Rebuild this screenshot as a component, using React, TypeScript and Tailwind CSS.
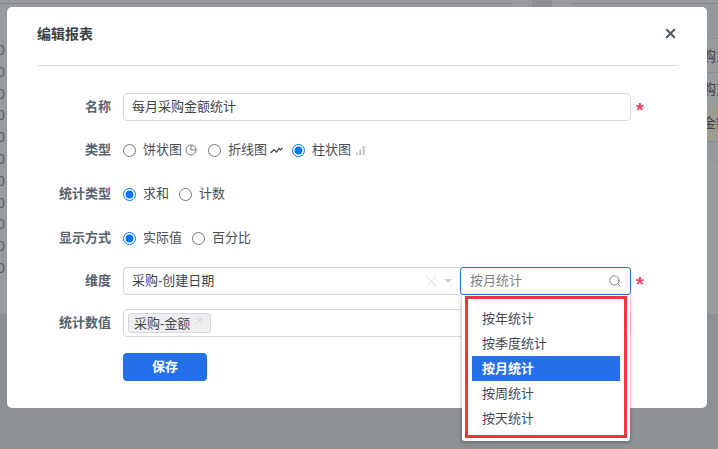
import React from 'react';
import { X, Search } from 'lucide-react';

const leftRows = [0, 1, 2, 3, 4, 5, 6, 7, 8, 9, 10];
const options = ['按年统计', '按季度统计', '按月统计', '按周统计', '按天统计'];

function PieIcon() {
  return (
    <svg width="12" height="12" viewBox="0 0 12 12" fill="none" stroke="#777" strokeWidth="1">
      <circle cx="6" cy="6" r="5" />
      <path d="M6 1v5h5" />
    </svg>
  );
}

function LineIcon() {
  return (
    <svg width="13" height="12" viewBox="0 0 13 12" fill="none" stroke="#444" strokeWidth="1.2">
      <path d="M0.5 9l3.5-3.5 2.5 2.5 2.5-3.5 1.5 1.5 2-2" />
    </svg>
  );
}

function BarIcon() {
  return (
    <svg width="9" height="10" viewBox="0 0 9 10" fill="#bdbdbd">
      <rect x="0" y="7.5" width="1.8" height="2.5" />
      <rect x="3.4" y="4.5" width="1.8" height="5.5" />
      <rect x="6.8" y="1" width="1.8" height="9" />
    </svg>
  );
}

function Radio({ name, label, checked, icon }: { name: string; label: string; checked?: boolean; icon?: React.ReactNode }) {
  return (
    <label className="flex items-center">
      <input type="radio" name={name} defaultChecked={checked} className="m-0 w-[13px] h-[13px]" />
      <span className="ml-[7px] text-[13px] leading-[18px] text-[#4a4f55]">{label}</span>
      {icon && <span className="ml-[3px] flex items-center">{icon}</span>}
    </label>
  );
}

function Row({ label, className, children }: { label: string; className?: string; children: React.ReactNode }) {
  return (
    <div className={`flex items-center ${className ?? ''}`}>
      <div className="w-[74px] mr-[12px] -mt-[1px] text-right text-[13px] leading-[18px] font-bold text-[#59626c]">{label}</div>
      {children}
    </div>
  );
}

function Star() {
  return <span className="ml-[5px] h-[13px] -mt-[1px] text-[20px] leading-[20px] font-bold text-[#f43f6b]">*</span>;
}

export default function App() {
  return (
    <div
      className="relative w-[718px] h-[449px] overflow-hidden bg-[#8e9194] text-[13px]"
      style={{ fontFamily: '"Liberation Sans", "Noto Sans CJK SC", sans-serif' }}
    >
      {/* Page behind the mask */}
      <div className="flex justify-between">
        <div className="w-[7px] h-[314px] bg-[#999c9e] overflow-hidden pt-[40px]">
          {leftRows.map(i => (
            <div key={i} className="h-[21.8px] leading-[20px] text-[14px] text-[#5a5d5f] -ml-[3px]">0</div>
          ))}
        </div>
        <div className="w-[16px] bg-[#999c9e] overflow-hidden">
          <div className="h-[38px] bg-[#94989a]" />
          <div className="h-[34px] leading-[34px] text-[14px] text-[#3e4144] whitespace-nowrap border-t border-[#8b8e90]">购主</div>
          <div className="h-[35px] leading-[33px] text-[14px] text-[#3e4144] whitespace-nowrap border-t border-[#8b8e90]">购对</div>
          <div className="h-[34px] leading-[32px] text-[14px] text-[#3e4144] whitespace-nowrap bg-[#9f9b8f]">金额</div>
          <div className="h-[21px] bg-[#96999b] border-t border-[#85888a]" />
        </div>
      </div>

      {/* Top stripe of the page behind */}
      <div className="absolute top-0 left-0 right-0 h-[7px] bg-[#999c9e]">
        <div className="absolute top-[3px] left-0 w-[512px] h-px bg-[#808386]" />
        <div className="absolute top-0 left-[532px] w-[20px] h-[7px] bg-[#8e9193]" />
        <div className="absolute top-[3px] left-[572px] right-0 h-px bg-[#808386]" />
      </div>

      {/* Modal */}
      <div className="absolute left-[7px] top-[7px] w-[700px] h-[401px] bg-white rounded-[5px] px-[30px]">
        <div className="h-[59px] border-b border-[#dcdde3] flex items-center justify-between">
          <h2 className="text-[14px] font-bold text-[#3a4148] -mt-[4px]">编辑报表</h2>
          <X size={15} strokeWidth={3.4} className="text-[#555e68] -mt-[5px] -mr-[1px]" />
        </div>

        <div className="flex flex-col">
          <Row label="名称" className="mt-[27px]">
            <div className="w-[508px] h-[28px] border border-[#d5d7e0] rounded-[4px] px-[8px] flex items-center text-[13px] text-[#3e4349]">
              每月采购金额统计
            </div>
            <Star />
          </Row>

          <Row label="类型" className="mt-[20px] h-[18px]">
            <div className="flex items-center">
              <Radio name="type" label="饼状图" icon={<PieIcon />} />
              <div className="ml-[11px]"><Radio name="type" label="折线图" icon={<LineIcon />} /></div>
              <div className="ml-[9px]"><Radio name="type" label="柱状图" checked icon={<span className="ml-[2px]"><BarIcon /></span>} /></div>
            </div>
          </Row>

          <Row label="统计类型" className="mt-[26px] h-[18px]">
            <div className="flex items-center gap-[10px]">
              <Radio name="sum" label="求和" checked />
              <Radio name="sum" label="计数" />
            </div>
          </Row>

          <Row label="显示方式" className="mt-[26px] h-[18px]">
            <div className="flex items-center gap-[10px]">
              <Radio name="show" label="实际值" checked />
              <Radio name="show" label="百分比" />
            </div>
          </Row>

          <Row label="维度" className="mt-[20px]">
            <div className="w-[337px] h-[28px] border border-[#d5d7e0] border-r-0 rounded-l-[4px] pl-[8px] pr-[8px] flex items-center justify-between text-[#3e4349]">
              <span>采购-创建日期</span>
              <span className="flex items-center gap-[3px]">
                <X size={19} strokeWidth={1} className="text-[#cfd0d4]" />
                <span className="w-0 h-0 border-x-[4px] border-x-transparent border-t-[4px] border-t-[#d0d1d5]" />
              </span>
            </div>
            <div className="w-[171px] h-[28px] border border-[#2470eb] rounded-[3px] pl-[9px] pr-[8px] flex items-center justify-between text-[#7d7f83]">
              <span>按月统计</span>
              <Search size={14} strokeWidth={1.3} className="text-[#555]" />
            </div>
            <Star />
          </Row>

          <Row label="统计数值" className="mt-[14px]">
            <div className="w-[508px] h-[28px] border border-[#d5d7e0] rounded-[4px] pl-[4px] flex items-center">
              <div className="h-[20px] w-[83px] bg-[#eeeef0] border border-[#d5d7e0] rounded-[3px] pl-[5px] flex items-start text-[#44494f] leading-[19px]">
                采购-金额
                <X size={11} strokeWidth={1.2} className="ml-[4px] mt-[1px] text-[#b5b7bb]" />
              </div>
            </div>
          </Row>

          <div className="mt-[16px] ml-[86px] w-[84px] h-[28px] rounded-[4px] bg-[#2470eb] text-white text-[13px] font-bold flex items-center justify-center">
            保存
          </div>
        </div>
      </div>

      {/* Open dropdown */}
      <div className="absolute left-[462px] top-[295px] w-[168px] h-[146px] bg-white rounded-b-[3px] shadow-[0_1px_4px_rgba(0,0,0,0.35)] px-[10px] pt-[11px]">
        {options.map(o => (
          <div
            key={o}
            className={`h-[25px] leading-[25px] pl-[10px] text-[13px] ${o === '按月统计' ? 'bg-[#2470eb] text-white font-bold' : 'text-[#44494f]'}`}
          >
            {o}
          </div>
        ))}
      </div>

      {/* Red annotation box */}
      <div className="absolute left-[465px] top-[296px] w-[162px] h-[142px] border-[3px] border-[#f4333c]" />
    </div>
  );
}
